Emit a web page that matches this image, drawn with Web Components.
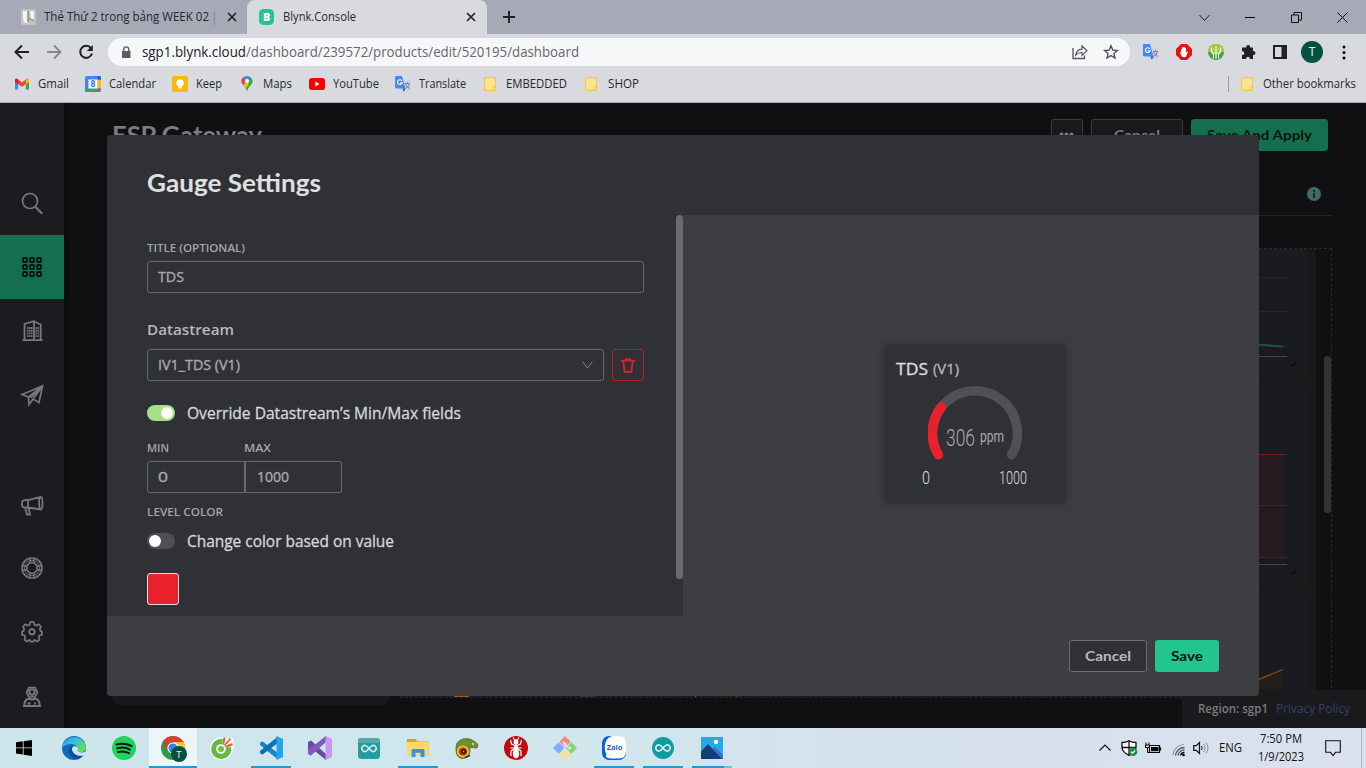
<!DOCTYPE html>
<html lang="en">
<head>
<meta charset="utf-8">
<title>Blynk.Console</title>
<style>
html,body{margin:0;padding:0;height:100%;overflow:hidden;background:#101012}
body{font-family:"Open Sans","Noto Sans",sans-serif}
</style>
</head>
<body>
<desktop-screen></desktop-screen>
<script>
const ICONS = {
trello:`<rect x="0" y="0" width="15" height="16" rx="2" fill="#c6c2bd"/><path d="M2 2h4.600v12H4.500Q2 13 2 10z" fill="#f7f5f1"/><path d="M9 2h4v8l-3 2z" fill="#f4f4f2"/><path d="M7 2v11M8.500 9q1.500 3 4 2" stroke="#676a65" fill="none"/>`,
blynk:`<rect width="15" height="16" rx="4.500" fill="#24c48e"/><text x="4" y="12" font-size="11" font-weight="800" fill="#fff" font-family="Open Sans,sans-serif">B</text>`,
close:`<path d="M1 1l8 8M9 1l-8 8" stroke="#202124" stroke-width="1.700" fill="none"/>`,
plus:`<path d="M6 0v12M0 6h12" stroke="#202124" stroke-width="1.900"/>`,
chev:`<path d="M.5 1l5 5.500 5-5.500" fill="none" stroke="#222" stroke-width="1"/>`,
min:`<path d="M0 5.500h10" stroke="#000"/>`,
restore:`<path d="M.5 3h7v7.500h-7zM3 3V.5h7.500v7.500H7.500" fill="none" stroke="#111"/>`,
winx:`<path d="M.5.500l10 10M10.500.500l-10 10" stroke="#111"/>`,
back:`<path d="M15 8H2M8 1.500L1.500 8 8 14.500" fill="none" stroke="#202124" stroke-width="2"/>`,
fwd:`<path d="M1 8h13M8 1.500L14.500 8 8 14.500" fill="none" stroke="#86888d" stroke-width="1.800"/>`,
reload:`<path d="M13 4.200A6 6 0 1 0 14 9.500" fill="none" stroke="#202124" stroke-width="2"/><path d="M14.800 1v6h-6z" fill="#202124"/>`,
lock:`<path d="M1 5h8.500v7H1z" fill="#5a5d62"/><path d="M2.800 5V3.300a2.400 2.400 0 0 1 4.900 0V5" fill="none" stroke="#5a5d62" stroke-width="1.400"/>`,
share:`<path d="M1 4v10.500h11.500v-3" fill="none" stroke="#55585d" stroke-width="1.300"/><path d="M3.800 11Q4.500 5.600 10 5.200V2l5 4.800-5 4.600V8.500Q6 8.300 3.800 11z" fill="none" stroke="#55585d" stroke-width="1.200"/>`,
star:`<path d="M8 1.800l1.800 4.300 4.600.4-3.500 3 1.100 4.500L8 11.600 4 14l1.100-4.500-3.500-3 4.600-.4z" fill="none" stroke="#4a4d52" stroke-width="1.300"/>`,
gtrans:`<rect x="6" y="3.500" width="10" height="12" rx="1" fill="#d2d3d8"/><path d="M10 7.500h5M12.500 6v1.500M14.500 7.500q-1 4-4 5M10.500 8q2 4 4.500 4.500" stroke="#7d8591" stroke-width="1" fill="none"/><path d="M0 1.200Q0 0 1.200 0H7l3.500 12.500H1.200Q0 12.500 0 11.300z" fill="#4688f1"/><path d="M7.500 12.500h3L8.800 15.800z" fill="#2450b5"/><path d="M7 5A2.400 2.400 0 1 0 7.200 6.700H5" stroke="#fff" stroke-width="1.100" fill="none"/>`,
hand:`<path d="M5 0h6l5 5v6l-5 5H5l-5-5V5z" fill="#e81313"/><path d="M4 8.300l1 .2V5.200q.7-.6 1.200 0V3.600q.7-.6 1.300 0V2.900q.7-.5 1.300 0V4q.7-.5 1.300 0v4.600l1.200-1q.8.2.4.900L9.800 13H6.500Q4.500 11 4 8.300z" fill="#fff"/>`,
idm:`<circle cx="8" cy="8" r="8" fill="#42ab37"/><path d="M0 8A8 8 0 0 1 16 8z" fill="#a5ce3e"/><path d="M3.500 3.500v4q2 1.500 2 3v4M8 2.500v12M12.500 3.500v4q-2 1.500-2 3v4M3.500 9h9" stroke="#fff" stroke-width="1.100" fill="none"/>`,
puzzle:`<path d="M6.200 3.500V3a2 2 0 1 1 4 0v.5H13V7h.5a1.900 1.900 0 1 1 0 3.900H13V15H9.800v-.5a1.800 1.800 0 0 0-3.600 0v.5H2v-4h.5a1.800 1.800 0 0 0 0-3.700H2V3.500z" fill="#202124"/>`,
panel:`<path d="M1 1h12v12H1z" fill="none" stroke="#202124" stroke-width="2"/><path d="M8.500 1H13v12H8.500z" fill="#202124"/>`,
dots:`<circle cx="2" cy="2" r="1.500"/><circle cx="2" cy="7.500" r="1.500"/><circle cx="2" cy="13" r="1.500"/>`,
gmail:`<path d="M0 2v9.500h3.200V5.500z" fill="#4285f4"/><path d="M14 2v9.500h-3.200V5.500z" fill="#34a853"/><path d="M0 1.500Q1 0 2.600 1L7 4.500 11.400 1Q13 0 14 1.500V4L7 8.800 0 4z" fill="#ea4335"/><path d="M10.800 1.400Q13 0 14 1.500V4l-3.200 2.200z" fill="#fbbc04"/><path d="M0 1.500Q1 0 3.200 1.400v4.800L0 4z" fill="#c5221f"/>`,
cal:`<rect width="16" height="16" rx="1.500" fill="#4285f4"/><path d="M12.500 3.500H16v9h-3.500z" fill="#fbbc04"/><path d="M0 12.500h12.500V16H1.500Q0 16 0 14.500z" fill="#34a853"/><path d="M12.500 12.500H16L12.500 16z" fill="#ea4335"/><path d="M12.500 0h2Q16 0 16 1.500v2h-3.500z" fill="#1967d2"/><path d="M3.500 3.500h9v9h-9z" fill="#fff"/><text x="5.500" y="11.300" font-size="8.500" font-weight="700" fill="#1a73e8" font-family="Roboto,sans-serif">8</text>`,
keep:`<rect width="16" height="16" rx="2.500" fill="#fbb904"/><circle cx="8" cy="7" r="3.700" fill="#fff"/><path d="M6.300 9.500h3.400v3H6.300z" fill="#fff"/>`,
maps:`<path d="M6 15.500Q5.500 12 2 9 -.5 5.500 1 3 3-.2 6 .2 10 .2 11.300 4 12 7 9 10 6.500 12.500 6 15.500z" fill="#34a853"/><path d="M1 3Q3-.2 6 .2 8 0 9.300 1.300L1.800 8.700Q-.2 6 1 3z" fill="#4285f4"/><path d="M.9 3L2 1.500 5 4 1.800 8.700Q-.2 6 .9 3z" fill="#ea4335"/><path d="M2 9l6-5 2 3-5.500 5z" fill="#fbbc04"/><path d="M9.300 1.300Q12.500 4 11 7.500L9 10 7 8z" fill="#34a853"/><circle cx="6" cy="5" r="2.100" fill="#fff"/>`,
yt:`<rect y="0" width="16" height="12" rx="2.800" fill="#f00"/><path d="M6.300 3.500L10.600 6 6.300 8.500z" fill="#fff"/>`,
folder:`<path d="M.6.600h10.800v12.800H.6z" fill="#fee38e" stroke="#f0ca54" stroke-width="1.200"/><path d="M9 13.400V9.800h2.500v3.600z" fill="#fee9a5" stroke="#edc13c"/>`,
search:`<circle cx="8" cy="8" r="7.500" stroke-width="1.700"/><path d="M13 13.500l7.200 7.200" stroke-width="2.200"/>`,
grid:`<g stroke="#07150f" stroke-width="1.800"><rect x="1" y="1" width="4" height="4" rx="1"/><rect x="8" y="1" width="4" height="4" rx="1"/><rect x="15" y="1" width="4" height="4" rx="1"/><rect x="1" y="8" width="4" height="4" rx="1"/><rect x="8" y="8" width="4" height="4" rx="1"/><rect x="15" y="8" width="4" height="4" rx="1"/><rect x="1" y="15" width="4" height="4" rx="1"/><rect x="8" y="15" width="4" height="4" rx="1"/><rect x="15" y="15" width="4" height="4" rx="1"/></g>`,
build:`<path d="M.5 20.200h20M2.500 20V4L12 1.200v19M12 1.500l6.700 3V20" stroke-width="1.800"/><path d="M5 8h6M5 10.700h6M5 13.400h6M5 16.100h6M13.500 8h4M13.500 10.700h4M13.500 13.400h4M13.500 16.100h4" stroke-width="1.900" stroke-dasharray="1.500 .5"/>`,
plane:`<path d="M1 9.500L21.500 1 18 17.500l-6-3.500-4 5.500-.5-7.500zM7.500 12L21.500 1 12 14M21.500 1L9.500 13" stroke-width="1.700"/>`,
horn:`<path d="M1.500 5Q4 3.500 7 4L20 .8Q21.500 1 21.500 7t-1.500 6.500L7 11.500Q3 12 1.500 10.500 .3 8 1.500 5zM7 4v7.500M4 11.500l2 7h3l-1.500-7M19 1.500q-2 4.500 0 11.500" stroke-width="1.800"/>`,
buoy:`<circle cx="11" cy="11" r="10" stroke-width="1.700"/><circle cx="11" cy="11" r="5.300" stroke-width="1.700"/><path d="M9 1.500v4.500M13 1.500v4.500M9 16v4.500M13 16v4.500M1.500 9h4.500M1.500 13h4.500M16 9h4.500M16 13h4.500" stroke-width="1.500"/><circle cx="11" cy="11" r="7.700" stroke-width=".9"/>`,
gear:`<path d="M9.300 1h3.400l.7 2.700 1.800.8 2.500-1.300 2.300 2.400-1.200 2.500.6 1.700 1.600.9v3l-2.400.8-.9 1.900.8 2.400-2.700 1.700-1.800-1.500h-.8l-1 1.700H9.800l-1-1.700H8l-1.800 1.500-2.700-1.700.8-2.400-.9-1.900L1 13.700v-3l1.600-.9.6-1.700L2 5.600l2.300-2.400 2.500 1.300 1.800-.8z" stroke-width="1.700"/><circle cx="11" cy="10.800" r="2.700" stroke-width="1.800"/>`,
user:`<path d="M6 1.500h6l2.500 5L12 11H6L3.500 6.500z" stroke-width="1.700"/><circle cx="9" cy="6" r="2.700" stroke-width="1.900"/><path d="M1 20q.5-7 5.500-7.500 2.500 2 5 0Q16.500 13 17 20zM4.500 17.500h3M11 17.500h2" stroke-width="1.800"/>`,
trash:`<path d="M0 2.700h14M4.800 2.500V1h4.400v1.500" stroke="#d3222d" stroke-width="1.700" fill="none"/><path d="M2.300 3l1.300 11h6.800L11.700 3" fill="none" stroke="#d3222d" stroke-width="1.900"/>`,
down:`<path d="M.7.700L5.500 7 10.300.700" fill="none" stroke="#808184" stroke-width="1"/>`,
win:`<path d="M0 2.300L6.800 1.300V7.500H0zM7.600 1.200L16 0v7.500H7.600zM0 8.300h6.800v6.200L0 13.500zM7.600 8.300H16V16l-8.400-1.300z" fill="#000"/>`,
edge:`<defs><linearGradient id="a" x1="0" y1="0" x2="1" y2=".5"><stop offset="0" stop-color="#2b9be8"/><stop offset=".5" stop-color="#34c1d8"/><stop offset="1" stop-color="#5fe05a"/></linearGradient></defs><circle cx="12" cy="12" r="12" fill="#0f6cbd"/><path d="M.2 12A12 12 0 0 1 24 11q0 5-5 5.300-4.500 0-3-2.800Q15.500 9 11 8.200 4 7.500.2 12z" fill="url(#a)"/><path d="M9 10q-4 4-1 9 3 4 8 4 4-1.500 6.500-5Q14 21 10.800 16q-1.500-3 .8-5.500z" fill="#0b4f9e"/><path d="M10.600 11.500Q12 9.500 14.500 10.500q2 1.500 1.500 3-1.500 2.500 3 2.900 2.500.1 4.500-1l1.500 1.500-3 2.500q-7 1.500-10.800-3-1.800-2.500-1.200-4.900z" fill="#d0e5ec"/>`,
spotify:`<circle cx="12" cy="12" r="12" fill="#1ed45f"/><path d="M4.500 8.500q8-2.300 15 1.500M5.200 12.300q7-2 12.800 1.300M6 16q6-1.500 11 1.200" fill="none" stroke="#0c1510" stroke-width="2" stroke-linecap="round"/>`,
chrome:`<circle cx="12" cy="12" r="12" fill="#2a9c48"/><path d="M1.600 6A12 12 0 0 1 22.400 6H12z" fill="#e33b2e"/><path d="M1.600 6L7 15l5-8z" fill="#e33b2e"/><path d="M22.400 6A12 12 0 0 1 12 24l5-9-5-9z" fill="#fcc62a"/><circle cx="12" cy="12" r="5.600" fill="#fff"/><circle cx="12" cy="12" r="4.500" fill="#3b7ded"/><circle cx="18" cy="18" r="8" fill="#04513f"/><text x="15" y="21.500" font-size="9.500" fill="#dce9e5" font-family="Roboto,sans-serif">T</text>`,
coccoc:`<circle cx="11.500" cy="12.500" r="11.500" fill="#f7fbf4"/><path d="M13 2h9q1.500 0 1.500 2v9z" fill="#f7fbf4"/><path d="M13 3.200A10 10 0 1 0 21 11l-4.500.8a5.500 5.500 0 1 1-4.500-4.200z" fill="#65b844"/><circle cx="11" cy="13" r="6.500" fill="#65b844"/><circle cx="11" cy="13" r="4.800" fill="#fff"/><circle cx="11" cy="13" r="3" fill="#72bf48"/><path d="M13.500 7l1-5.500M17 10.500l5.500-2.500" stroke="#f05340" stroke-width="2"/><path d="M15.500 8.500l5-6" stroke="#f05340" stroke-width="1.700"/>`,
vscode:`<path d="M1 7l2.200-1.700L19 17v6.500L1 9z" fill="#1684c9"/><path d="M1 17l2.200 1.700L19 7V.5L1 15z" fill="#0a72b5"/><path d="M17.500 0L24 3v18l-6.500 3z" fill="#25a3ee"/>`,
vs:`<path d="M0 6l3-1.500L18 18v6L3 12v7.500L0 18z" fill="#6b4b9f"/><path d="M0 18l3 1.500L18 6V0L0 14z" fill="#8758bb"/><path d="M17.500 0L24 3v18l-6.500 3z" fill="#c795f2"/>`,
ardsq:`<rect width="22" height="21" rx="3.500" fill="#259da0"/><rect width="22" height="5" rx="2.500" fill="#57aaa9"/><path d="M11 10.500Q7.500 6 5 8t0 5q2.500 2 6-2.500 3.500-4.500 6-2.500t0 5q-2.500 2-6-2.500z" fill="none" stroke="#d6eeee" stroke-width="1.600"/>`,
files:`<path d="M0 0h9l1 2.500h11.500V17H0z" fill="#e0a019"/><path d="M0 3h21.500v14H0z" fill="#fdd767"/><path d="M4.500 18v-6.500Q4.500 10 6 10h10q1.500 0 1.500 1.500V18h-4v-4.300H8.500V18z" fill="#3794dc"/>`,
cham:`<path d="M1 12Q0 3 8 1q6-1.500 11 2l4 3.500-1 3.500-6-.5q-2 1-1 4-1 7-8 7-6-1-6-8.500z" fill="#6f8f2a" stroke="#4a5c1c" stroke-width=".7"/><circle cx="8" cy="13.500" r="6" fill="#e4d121"/><circle cx="8" cy="13.500" r="4.300" fill="#d5321c"/><circle cx="8.500" cy="13.500" r="2.600" fill="#331512"/><circle cx="8.500" cy="13.500" r="1" fill="#e66"/><circle cx="18" cy="6" r="1.200" fill="#cfd3a0"/><path d="M10 19.500l5-2" stroke="#333" stroke-width="1.500"/>`,
ant:`<circle cx="12" cy="12" r="12" fill="#c10b10"/><path d="M9 1.500l2 3M15 1.500l-2 3M6.500 4l1 4 3.500 1.500M17.500 4l-1 4-3.500 1.500M6.500 12h11M7 20v-5l4-2.500M17 20v-5l-4-2.500" stroke="#fff" stroke-width="1.200" fill="none"/><ellipse cx="12" cy="6" rx="2.400" ry="2.700" fill="#fff"/><ellipse cx="12" cy="11" rx="1.900" ry="2.500" fill="#fff"/><ellipse cx="12" cy="17.500" rx="3.200" ry="5" fill="#fff"/>`,
git:`<g transform="rotate(45 12 12)"><rect x="3.500" y="3.500" width="8" height="8" fill="#f7827e"/><rect x="12.500" y="3.500" width="8" height="8" fill="#8ed26c"/><rect x="3.500" y="12.500" width="8" height="8" fill="#80adf5"/><rect x="12.500" y="12.500" width="8" height="8" fill="#fbe285"/></g><path d="M9.500 5.500L16 12M12 8v9" stroke="#d0e5ec" stroke-width="1.500"/><circle cx="12" cy="17" r="1.800" fill="#d0e5ec"/><circle cx="16.500" cy="12" r="1.800" fill="#d0e5ec"/><circle cx="12" cy="8" r="1.800" fill="#d0e5ec"/>`,
zalo:`<rect width="24" height="24" rx="7" fill="#0a5fe8"/><path d="M10 0h8q6 0 6 7v8q0 7.500-7 7.500H8L3.500 21Q5 19.500 4 17.500 1 10 5 3.500 7 .5 10 0z" fill="#fff"/><text x="4.700" y="14.300" font-size="7.500" font-weight="700" fill="#1565e8" font-family="Open Sans,sans-serif">Zalo</text>`,
ard:`<circle cx="11" cy="11" r="11" fill="#119ba1"/><path d="M11 11Q7.500 6.500 5 8.500t0 5q2.500 2 6-2.500 3.500-4.500 6-2.500t0 5q-2.500 2-6-2.500z" fill="none" stroke="#e4f5f5" stroke-width="1.600"/>`,
photos:`<path d="M0 0h22v22H0z" fill="#28a8ea"/><path d="M9 14l5-4.500 8 9V22H9z" fill="#3d6fce"/><path d="M0 14.500L7 7l14 15H0z" fill="#133f77"/><circle cx="15" cy="5" r="2.200" fill="#f6fbff"/>`,
up:`<path d="M.5 6.500L6 1l5.500 5.500" fill="none" stroke="#111" stroke-width="1.200"/>`,
shield:`<path d="M8 .7Q11 2.500 15 2.500V8q-.5 4-7 7.300Q1.500 12 1 8V2.500Q5 2.500 8 .7zM8 1v14M1 7.500h14" fill="#fff" stroke="#111" stroke-width="1.300"/><circle cx="12" cy="11.700" r="4.300" fill="#1a8f46"/><path d="M10 11.700l1.500 1.500 2.600-2.700" fill="none" stroke="#fff" stroke-width="1.200"/>`,
batt:`<path d="M4.500 3.500h10v7h-10zM15.500 5.500v3" fill="none" stroke="#000" stroke-width="1.200"/><path d="M6 5h7.500v4.200H6z"/><path d="M1 .5v2.500M4 .5v2.500M.5 3h4v2.500H.5zM2.500 5.500v5h2" stroke="#000" fill="none"/>`,
wifi:`<path d="M1 12A11.500 11.500 0 0 1 12 1.500" stroke="#96999f" fill="none" stroke-width="1.200"/><path d="M3.500 12.500A9 9 0 0 1 12.500 4.500M6 12.500A6.500 6.500 0 0 1 12.500 7" stroke="#555" fill="none" stroke-width="1.300"/><path d="M8.500 12.500A4 4 0 0 1 12.500 9.500" stroke="#111" fill="none" stroke-width="1.300"/><circle cx="11.500" cy="12" r="1.300"/>`,
vol:`<path d="M.7 4.700h2.600L6.500 1.500v11L3.300 9.300H.7z" fill="none" stroke="#111" stroke-width="1.200"/><path d="M8.500 5q1.500 2 0 4" fill="none" stroke="#111"/><path d="M10.700 3q3 4 0 8M13 1.500q4 5.500 0 11" fill="none" stroke="#8e9198"/>`,
note:`<path d="M.7.700h14.600v11.600H10.500L8 15.500 5.500 12.300H.7z" fill="none" stroke="#111" stroke-width="1.100"/>`,
more:`<circle cx="2.500" cy="2.500" r="2"/><circle cx="7.500" cy="2.500" r="2"/><circle cx="12.500" cy="2.500" r="2"/>`,
info:`<circle cx="7" cy="7" r="7" fill="#41686b"/><path d="M7 3v1.700M7 6v5" stroke="#121c1d" stroke-width="1.700"/>`
};
const define = (name, html) => customElements.define(name, class extends HTMLElement {
  constructor(){ super(); const t=document.createElement('template'); t.innerHTML=html; this.attachShadow({mode:'open'}).append(t.content.cloneNode(true)); }
});
const ic = (n,w,h,s='') => `<ui-icon name="${n}" w="${w}" h="${h}" style="${s}"></ui-icon>`;
const ft = (t,w,s='') => `<fit-text w="${w}" style="${s}">${t}</fit-text>`;

customElements.define('ui-icon', class extends HTMLElement {
  connectedCallback(){
    if(this.shadowRoot) return;
    const w=this.getAttribute('w'), h=this.getAttribute('h');
    this.attachShadow({mode:'open'}).innerHTML=`<style>:host{display:block;flex:none;width:${w}px;height:${h}px}svg{display:block;overflow:visible}.side{fill:none;stroke:#77787a;stroke-width:1.400}.dim{fill:#77787a}</style><svg class="${this.getAttribute('kind')||''}" width="${w}" height="${h}">${ICONS[this.getAttribute('name')]}</svg>`;
  }
});

define('browser-tabs', `<style>
:host{display:flex;height:34px;background:#a6aab6;font-size:12px;color:#25272b;align-items:center}
.t{width:226px;height:34px;padding-left:21px;display:flex;align-items:center}
.a{width:240px;height:34px;box-sizing:border-box;background:#d9dae0;border-radius:8px 8px 0 0;padding-left:12px;display:flex;align-items:center}
.w{margin-left:auto;display:flex;align-items:center;padding-right:18px;height:28px}
</style>
<div class="t">${ic('trello',15,16)}${ft('Thẻ Thứ 2 trong bảng WEEK 02',165,'margin-left:8px;margin-top:-1px')}<span style="color:#7b7f89;margin-left:2px;width:5px">|</span>${ic('close',10,10,'margin-left:11px')}</div>
<div class="a">${ic('blynk',15,16)}${ft('Blynk.Console',73,'margin-left:9px;margin-top:-1px')}${ic('close',10,10,'margin-left:110px')}</div>
${ic('plus',12,12,'margin-left:16px')}
<div class="w">${ic('chev',11,7,'margin-right:35px')}${ic('min',10,11,'margin-right:36px')}${ic('restore',11,11,'margin-right:35px')}${ic('winx',11,11)}</div>`);

define('browser-toolbar', `<style>
:host{display:flex;height:36px;background:#d9dae0;align-items:center;padding-left:14px}
.o{margin-left:14px;width:1022px;height:28px;box-sizing:border-box;border-radius:14px;background:#f6f7f9;display:flex;align-items:center;padding:0 11px 0 13px;font-size:14px;color:#202124}
.av{width:22px;height:22px;border-radius:50%;background:#04513f;color:#dfe9e6;font:12px/22px Roboto,sans-serif;text-align:center;margin-left:14px}
</style>
${ic('back',16,16)}${ic('fwd',16,16,'margin-left:16px')}${ic('reload',16,16,'margin-left:16px')}
<div class="o">${ic('lock',10,12)}${ft('sgp1.blynk.cloud',104,'margin-left:11px;margin-top:-1px')}${ft('/dashboard/239572/products/edit/520195/dashboard',333,'color:#64676c;margin-top:-1px')}
${ic('share',16,16,'margin-left:auto')}${ic('star',16,16,'margin-left:15px')}</div>
${ic('gtrans',16,16,'margin-left:13px')}${ic('hand',16,16,'margin-left:17px')}${ic('idm',16,16,'margin-left:16px')}${ic('puzzle',16,16,'margin-left:16px')}${ic('panel',14,14,'margin-left:17px')}<div class="av">T</div>${ic('dots',4,15,'margin-left:19px')}`);

const bm=(n,w,h,gap,t,tw,x)=>`<div style="width:${x}px">${ic(n,w,h,`margin-right:${gap}px`)}${ft(t,tw,'margin-top:-2px')}</div>`;
define('bookmarks-bar', `<style>
:host{display:flex;height:32px;box-sizing:border-box;background:#d9dae0;padding:0 10px 4px 15px;align-items:center;font-size:12px;color:#26282c}
div{display:flex;align-items:center;flex:none}.s{width:1px;height:16px;background:#9b9da4;margin:0 12px 0 auto}
</style>${bm('gmail',14,12,9,'Gmail',31,70)}${bm('cal',16,16,8,'Calendar',47,87)}${bm('keep',16,16,8,'Keep',26,69)}${bm('maps',12,16,10,'Maps',29,68)}${bm('yt',16,12,8,'YouTube',46,86)}${bm('gtrans',16,16,8,'Translate',47,89)}${bm('folder',12,14,10,'EMBEDDED',61,101)}${bm('folder',12,14,11,'SHOP',31,60)}
<span class="s"></span>${ic('folder',12,14,'margin-right:10px')}${ft('Other bookmarks',93,'margin-top:-2px')}`);

define('side-nav', `<style>
:host{display:flex;flex-direction:column;width:64px;height:625px;box-sizing:border-box;padding-top:68px;background:#1b1c20;flex:none}
div{height:64px;flex:none;display:flex;align-items:center;justify-content:center}.on{background:#146f4f}.gap{height:auto;flex:1}
</style>
<div><ui-icon name="search" w="21" h="21" kind="side"></ui-icon></div>
<div class="on"><ui-icon name="grid" w="21" h="21" kind="side"></ui-icon></div>
<div><ui-icon name="build" w="21" h="22" kind="side"></ui-icon></div>
<div><ui-icon name="plane" w="22" h="20" kind="side"></ui-icon></div>
<div class="gap"></div>
<div style="padding-top:2px;height:62px"><ui-icon name="horn" w="22" h="19" kind="side"></ui-icon></div>
<div><ui-icon name="buoy" w="22" h="22" kind="side"></ui-icon></div>
<div><ui-icon name="gear" w="22" h="22" kind="side"></ui-icon></div>
<div><ui-icon name="user" w="18" h="21" kind="side"></ui-icon></div>`);

define('dashboard-page', `<style>
:host{display:block;flex:1;height:625px;box-sizing:border-box;padding:16px 34px 0 48px;background:linear-gradient(90deg,#0b0b0d,#101012 8px);overflow:hidden;font-family:Lato,sans-serif}
header{height:97px;display:flex;box-sizing:border-box;border-bottom:1px solid #232325;padding-right:4px}
h1{margin:0;font-size:24px;line-height:32px;font-weight:700;color:#7c7c7d;flex:1}
.b{height:32px;box-sizing:border-box;border:1px solid #3b3c3e;border-radius:3px;background:#18191b;color:#77787a;margin-left:8px;font-weight:700;font-size:14px;line-height:30px;text-align:center}
.g{background:#146f4f;border-color:#146f4f;color:#06150f}
.i{width:21px;padding-top:68px;margin-left:-21px}
.m{display:flex;margin-top:32px;height:458px}
.l{width:278px;height:457px;border-radius:0 0 8px 8px;background:#17181a}
.c{margin-left:10px;width:932px;height:450px;border:1px dashed #29292b;box-sizing:border-box;display:flex;overflow:hidden}
.p{width:915px;background:#19191a;display:flex;flex-direction:column;gap:8px;padding-right:8px;box-sizing:border-box}
.k{background:#1a1b1f;height:200px;flex:none;border-radius:0 0 3px 3px;display:flex;justify-content:flex-end}
.k svg{display:block}.sb{width:7px;height:157px;border-radius:4px;background:#333335;margin:107px 0 0 8px}
</style>
<header><h1>${ft('ESP Gateway',150)}</h1>
<div class="b" style="width:32px;padding:12px 0 0 7px"><ui-icon name="more" w="15" h="5" kind="dim"></ui-icon></div><div class="b" style="width:92px">${ft('Cancel',46)}</div><div class="b g" style="width:137px">${ft('Save And Apply',105)}</div>
<div class="i">${ic('info',14,14)}</div></header>
<div class="m"><div class="l"></div><div class="c"><div class="p">
<div class="k" style="height:129px"><svg width="50" height="129" fill="none"><path d="M0 28.500H29M0 62.500H29M0 97.500H29" stroke="#28292c"/><path d="M0 95.500L25 97.500" stroke="#1c6044" stroke-width="1.500"/><path d="M0 107.500H29" stroke="#45464a"/><path d="M32 116h5v-4" stroke="#0e0f11" stroke-width="1.500"/></svg></div>
<div class="k"><svg width="50" height="200" fill="none"><path d="M0 68H25V171H0z" fill="#271a1e"/><path d="M0 68.500H29M0 119.500H29M0 171.500H29" stroke="#302c30"/><path d="M0 68.500H25" stroke="#85151d"/><path d="M0 178.500H29" stroke="#45464a"/><path d="M32 187.500h5v-4" stroke="#0e0f11" stroke-width="1.500"/></svg></div>
<div class="k"><svg width="900" height="105" fill="none"><path d="M840 86L875 75.500V95H840z" fill="#241e1a"/><path d="M805 104L875 75.500" stroke="#884716" stroke-width="1.300"/><path d="M46 102.500h15" stroke="#a55718" stroke-width="3"/><path d="M172 102.500h15" stroke="#333" stroke-width="3"/><path d="M303 102.500h26" stroke="#241b13" stroke-width="3"/><path d="M287.500 101v4M329.500 101v3" stroke="#80451f"/></svg></div>
</div><div class="sb"></div></div></div>`);

define('toggle-switch', `<style>:host{display:block;flex:none;width:28px;height:16px;border-radius:8px;background:#4e4f51;box-sizing:border-box;padding:2px}i{display:block;width:12px;height:12px;border-radius:50%;background:#fff}:host([on]){background:#a7df87}:host([on]) i{margin-left:12px}</style><i></i>`);
define('text-box', `<style>:host{display:flex;align-items:center;box-sizing:border-box;height:32px;border:1px solid #68696c;border-radius:3px;padding:0 10px 1px;color:#a9a9ab;font-size:14px;-webkit-text-stroke:.35px #a9a9ab}</style><slot></slot>`);
define('gauge-card', `<style>
:host{display:block;box-sizing:border-box;width:182px;height:160px;padding:14px 12px 0;border-radius:5px;background:#303136;box-shadow:0 0 10px #28292d99;color:#ddd}
.t{height:22px;line-height:22px;font-size:16px;display:flex;gap:5px;-webkit-text-stroke:.3px}
.g{position:relative;width:94px;margin:6px auto 0}
svg{display:block}
.v{position:absolute;top:38px;font:300 23.500px/28px Roboto,sans-serif;color:#a9a9ab}
.r{display:flex;justify-content:space-between;font:300 18px/20px Roboto,sans-serif;padding:0 27px 0 26px;color:#dedede;margin-top:6px}
</style><div class="t">${ft('TDS',32)}${ft('(V1)',26,'font-size:14px;color:#b7b7b9')}</div>
<div class="g"><svg width="94" height="76"><g fill="none" stroke-width="9.500" stroke-linecap="round"><path d="M10.300 68.700A42.500 42.500 0 1 1 83.700 68.700" stroke="#505154"/><path d="M10.300 68.700A42.500 42.500 0 0 1 13.300 21" stroke="#ea202c"/></g></svg>
<div class="v" style="left:18px">${ft('306',29)}</div><div class="v" style="left:52px;font-size:17px;font-weight:400;line-height:24px">${ft('ppm',24)}</div></div>
<div class="r">${ft('0',8)}${ft('1000',28)}</div>`);

define('gauge-dialog', `<style>
:host{display:flex;flex-direction:column;width:1152px;height:561px;border-radius:4px;overflow:hidden;background:#303136;color:#d7d7d8}
h2{margin:0;height:80px;flex:none;box-sizing:border-box;padding:31px 40px 0;font:700 24px/34px Lato,sans-serif;color:#e0e0e1}
.m{display:flex;height:401px}.l{width:576px;display:flex;background:#303136}
form{flex:1;padding:25px 32px 0 40px;margin:0;display:flex;flex-direction:column}
.sb{width:7px;height:364px;border-radius:4px;background:#6a6b6e}
.r{flex:1;background:#3d3d42;display:flex;justify-content:center;padding:129px 8px 0 16px}
footer{height:80px;box-sizing:border-box;background:#3d3d42;display:flex;justify-content:flex-end;gap:8px;padding:24px 40px 0;font-family:Lato,sans-serif}
.b{height:32px;box-sizing:border-box;border-radius:3px;font-size:14px;line-height:32px;font-weight:700;text-align:center}
.c{width:78px;border:1px solid #6c6d70;background:#303136;color:#b9b9bb;line-height:30px}.s{width:64px;background:#24c48e;color:#06150f}
.lab{font-size:11px;line-height:16px;height:16px;font-weight:600;color:#a5a5a8}
.row{display:flex;flex:none}.sw{height:16px;line-height:16px;font-size:16px;gap:12px;-webkit-text-stroke:.3px}
.del{width:32px;height:32px;box-sizing:border-box;border:1px solid #b71c26;border-radius:3px;display:flex;align-items:center;justify-content:center;margin-left:8px}
.col{width:32px;height:32px;box-sizing:border-box;border:1px solid #dcdcdc;border-radius:3px;background:#ea202c;margin-top:24px}
</style>
<h2>${ft('Gauge Settings',174)}</h2>
<div class="m"><div class="l"><form>
<div class="lab">${ft('TITLE (OPTIONAL)',98)}</div>
<text-box style="margin-top:5px">${ft('TDS',26)}</text-box>
<div style="font-size:15px;line-height:20px;height:20px;font-weight:600;color:#b9b9bb;margin-top:26px">${ft('Datastream',87)}</div>
<div class="row" style="margin-top:10px"><text-box style="flex:1">${ft('IV1_TDS (V1)',82)}${ic('down',11,8,'margin-left:auto')}</text-box><div class="del">${ic('trash',14,15)}</div></div>
<div class="row sw" style="margin-top:24px"><toggle-switch on></toggle-switch>${ft('Override Datastream’s Min/Max fields',274)}</div>
<div class="row lab" style="margin-top:19px"><div style="width:97px">${ft('MIN',22)}</div>${ft('MAX',27)}</div>
<div class="row" style="margin-top:5px"><text-box style="width:98px;border-radius:3px 0 0 3px">${ft('0',10)}</text-box><text-box style="width:98px;border-radius:0 3px 3px 0;margin-left:-1px;padding-left:11px;border-left-width:2px">${ft('1000',32)}</text-box></div>
<div class="lab" style="margin-top:11px">${ft('LEVEL COLOR',76)}</div>
<div class="row sw" style="margin-top:13px"><toggle-switch></toggle-switch>${ft('Change color based on value',207)}</div>
<div class="col"></div>
</form><div class="sb"></div></div><div class="r"><gauge-card></gauge-card></div></div>
<footer><div class="b c">${ft('Cancel',46)}</div><div class="b s">${ft('Save',32)}</div></footer>`);

const tk=(n,w,h,cls='')=>`<div class="${cls}">${ic(n,w,h)}</div>`;
define('task-bar', `<style>
:host{display:flex;height:40px;background:linear-gradient(90deg,#cee5ec,#d1e6ed 45%,#d5e1ed 65%,#dae0ee);font-size:12px;color:#111}
div{width:49px;height:40px;box-sizing:border-box;display:flex;align-items:center;justify-content:center;flex:none;padding-right:1px}
.u{background:linear-gradient(#2c95cc,#2c95cc) 4px 38px/40px 2px no-repeat}
.p{background:linear-gradient(#2c95cc,#2c95cc) 4px 38px/32px 2px no-repeat,linear-gradient(#7dbcdc,#7dbcdc) 4px 38px/40px 2px no-repeat}
.a{background:#edf5f8;border-bottom:2px solid #2c95cc;padding:2px 0 0;width:48px;margin-right:1px}
.tray{width:auto;margin-left:auto;padding:0}
.time{width:46px;flex-direction:column;line-height:18px;margin-left:16px;padding:0 0 1px}
</style>
<div style="width:50px;padding-right:2px">${ic('win',16,16)}</div>${tk('edge',24,24)}<span style="width:1px"></span>${tk('spotify',24,24)}${tk('chrome',24,24,'a')}${tk('coccoc',24,24)}${tk('vscode',24,24,'u')}${tk('vs',24,24)}${tk('ardsq',22,21)}${tk('files',22,18,'u')}${tk('cham',24,21)}${tk('ant',24,24)}${tk('git',24,24)}${tk('zalo',24,24,'u')}${tk('ard',22,22,'u')}${tk('photos',22,22,'p')}
<div class="tray">${ic('up',12,8)}${ic('shield',16,16,'margin-left:10px')}${ic('batt',16,12,'margin-left:8px')}${ic('wifi',13,14,'margin-left:11px;margin-top:3px')}${ic('vol',16,14,'margin-left:8px')}${ft('ENG',23,'margin-left:10px;margin-top:-1px')}<div class="time">${ft('7:50 PM',42)}${ft('1/9/2023',46)}</div>${ic('note',16,16,'margin-left:21px')}<span style="width:1px;height:40px;background:#aeb3bf;margin:0 4px 0 20px"></span></div>`);

define('desktop-screen', `<style>
:host{display:block;width:1366px;height:768px;overflow:hidden}
main{position:relative;display:flex;height:625px}
.line{height:1px;background:#aaa8ae}
gauge-dialog{position:absolute;left:107px;top:32px}
.reg{position:absolute;right:0;bottom:0;width:184px;height:38px;box-sizing:border-box;background:#1a1a1c;padding:0 16px 1px;display:flex;align-items:center;justify-content:space-between;font-size:12px;font-weight:600;color:#7b7c7e}
</style><browser-tabs></browser-tabs><browser-toolbar></browser-toolbar><bookmarks-bar></bookmarks-bar><div class="line"></div>
<main><side-nav></side-nav><dashboard-page></dashboard-page><div class="reg">${ft('Region: sgp1',70)}${ft('Privacy Policy',74,'color:#35406d;font-weight:400')}</div><gauge-dialog></gauge-dialog></main>
<task-bar></task-bar>`);

/* Squeezes or stretches a run of text to the width given in its w attribute. */
customElements.define('fit-text', class extends HTMLElement {
  connectedCallback(){
    if(this.shadowRoot) return;
    const w=+this.getAttribute('w');
    this.attachShadow({mode:'open'}).innerHTML=`<style>:host{display:inline-block;flex:none;white-space:nowrap;text-align:left;width:${w}px}span{display:inline-block;transform-origin:0 50%}</style><span><slot></slot></span>`;
    const s=this.shadowRoot.querySelector('span'), n=s.offsetWidth ? s.getBoundingClientRect().width : w;
    s.style.transform=`scaleX(${w/n})`;
  }
});
</script>
</body>
</html>
